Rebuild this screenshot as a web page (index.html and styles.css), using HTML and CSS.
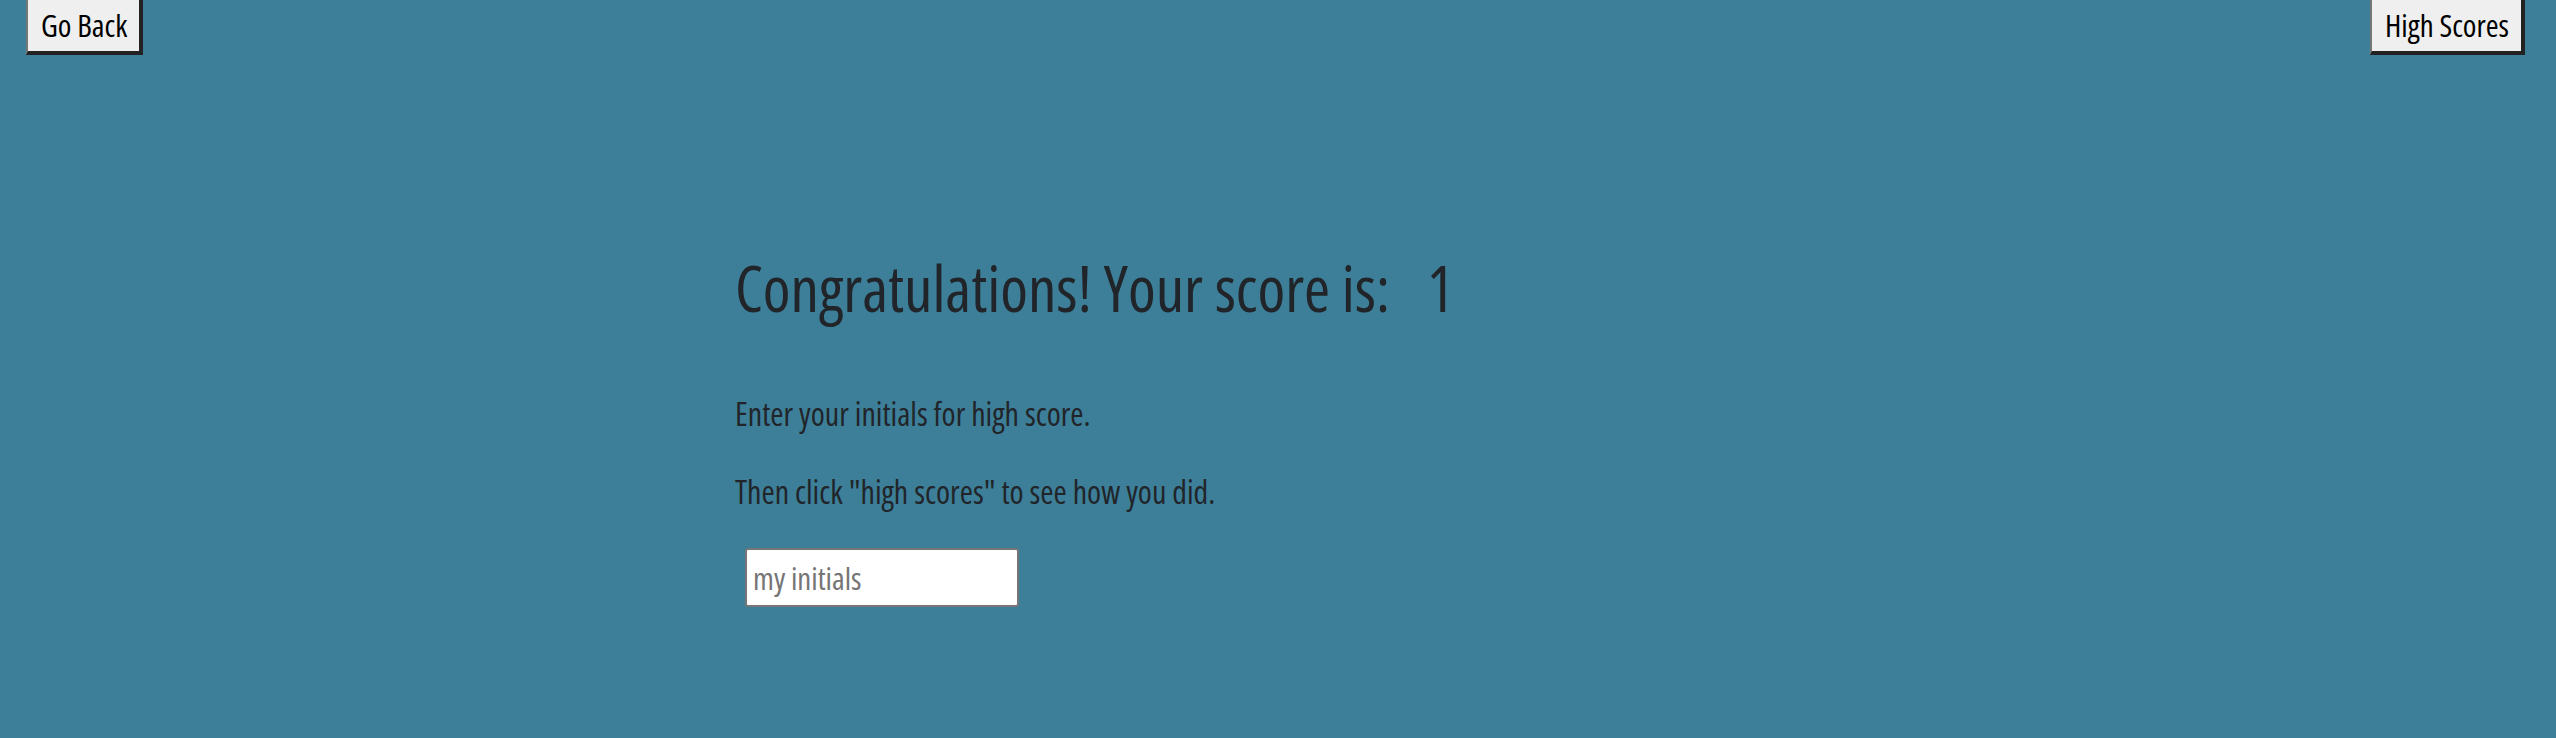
FILE: index.html
```html
<!DOCTYPE html>
<html lang="en">
<head>
<meta charset="utf-8">
<title>Quiz - Done</title>
<link rel="stylesheet" href="styles.css">
</head>
<body>
<header class="topbar">
  <button class="nav-btn" type="button">Go Back</button>
  <button class="nav-btn" type="button">High Scores</button>
</header>
<main class="result">
  <h1 class="result-title">Congratulations! Your score is:<span class="score">1</span></h1>
  <p class="result-text">Enter your initials for high score.</p>
  <p class="result-text result-text-last">Then click "high scores" to see how you did.</p>
  <input class="initials" type="text" placeholder="my initials">
</main>
</body>
</html>
```
FILE: styles.css
```css
* { box-sizing: border-box; }

html, body {
  margin: 0;
  height: 100%;
}

body {
  background: #3d7f99;
  color: #212529;
  font-family: "Open Sans", "Roboto Condensed", "Liberation Sans", sans-serif;
  font-stretch: 75%;
}

.topbar {
  display: flex;
  justify-content: space-between;
  align-items: flex-start;
  padding: 0 31px 0 26px;
}

.nav-btn {
  font-family: inherit;
  font-stretch: 75%;
  font-size: 31px;
  line-height: 37px;
  color: #000;
  background: #efefef;
  padding: 7px 12px 7px 13px;
  border-style: solid;
  border-width: 0 4px 4px 2px;
  border-color: #222 #222 #222 #777;
  border-radius: 0;
  cursor: pointer;
}

.result {
  max-width: 1086px;
  margin: 0 auto;
  padding-top: 196px;
}

.result-title {
  margin: 0;
  font-size: 63px;
  font-weight: 400;
  line-height: 74px;
}

.score {
  margin-left: 37px;
}

.result-text {
  margin: 70px 0 0;
  font-size: 32px;
  line-height: 38px;
}

.result-text-last {
  margin-top: 40px;
}

.initials {
  display: block;
  margin: 37px 0 0 10px;
  width: 274px;
  height: 59px;
  padding: 0 6px;
  font-family: inherit;
  font-stretch: 75%;
  font-size: 31px;
  color: #212529;
  background: #fff;
  border: 2px solid #767676;
  border-radius: 3px;
}

.initials::placeholder {
  color: #757575;
}
```
